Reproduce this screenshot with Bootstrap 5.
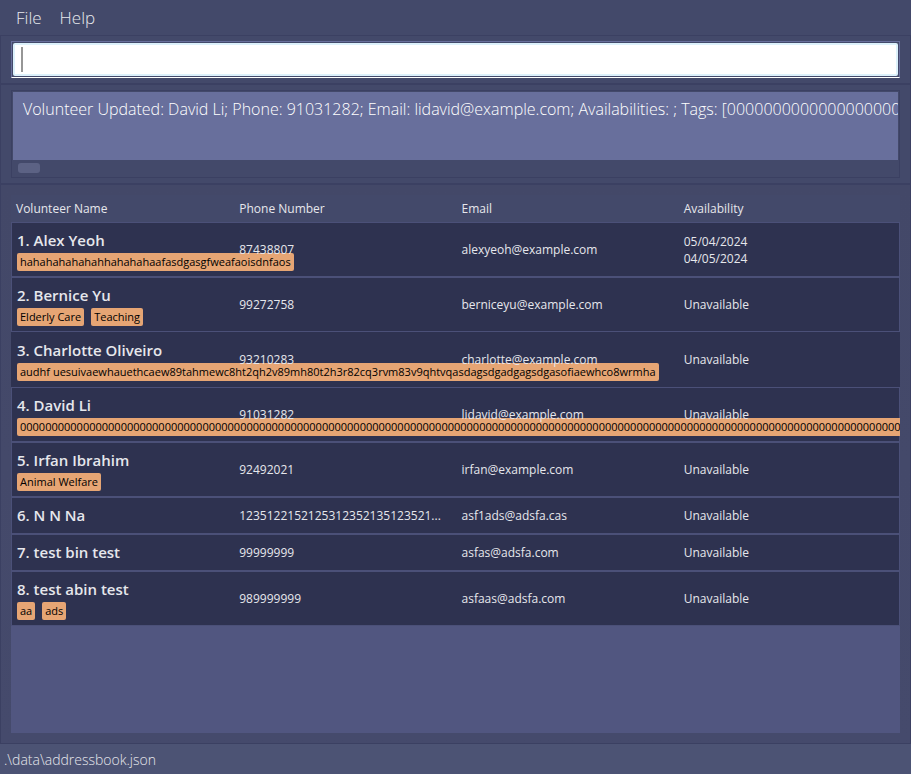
<!DOCTYPE html>
<html lang="en">
<head>
<meta charset="utf-8">
<meta name="viewport" content="width=device-width, initial-scale=1">
<title>Volunteers</title>
<link href="https://cdn.jsdelivr.net/npm/bootstrap@5.3.0/dist/css/bootstrap.min.css" rel="stylesheet">
<style>
  body { font-family: "Open Sans", "Noto Sans", sans-serif; background: #43496a; color: #e6e7ec; }
  .menu-strip { height: 35px; padding: 0 9px; gap: 4px; }
  .menu-item { font-size: 17px; font-weight: 300; line-height: 24px; color: #e8e9ee; padding: 0 7px; border: 0; background: none; }
  .pane { border: 1px solid #3b4062; padding: 5px 10px; }
  .command-frame { border: 1px solid #686f9c; border-bottom-color: #fff; padding: 1px; }
  .command-box { display: block; width: 100%; height: 33px; border: 2px solid #dcf1fb; border-radius: 2px; outline: 0; padding: 0 8px; font-size: 17px; caret-color: transparent;
    background: linear-gradient(#969696, #969696) no-repeat 6px 2px / 2px 25px #fff; }
  .result-frame { border: 1px solid #3b4062; padding: 1px; }
  .result-text { display: block; width: 100%; height: 68px; border: 0; border-radius: 0; outline: 0; resize: none; overflow: hidden; white-space: pre; background: #686f9c; color: #fff; font-size: 16px; font-weight: 300; line-height: 24px; padding: 5px 10px; }
  .scroll-track { height: 16px; padding: 3px 5px; }
  .scroll-thumb { width: 22px; height: 10px; border-radius: 3px; background: #5c6284; }
  .list-pane { padding: 10px; background: linear-gradient(#434868, #454a6c); }
  .list-frame { background: linear-gradient(#43496a 27px, #515680 27px); }
  .volunteers { table-layout: fixed; border-collapse: separate; border-spacing: 0; font-size: 12px; line-height: 17px; color: #e6e7ec; }
  .volunteers th { font-weight: 400; padding: 5px 6px; }
  .volunteers th:first-child { padding-left: 5px; }
  .volunteers td { border: 0 solid #4b5078; border-width: 1px 0; background: #2e3250; padding: 0 6px; vertical-align: middle; white-space: nowrap; }
  .volunteers td:first-child { border-left-width: 1px; vertical-align: top; padding: 7px 5px 5px; }
  .volunteers td:last-child { border-right-width: 1px; }
  .volunteers tbody tr { height: 37px; }
  .volunteers .is-picked td { border-color: #2e3250; }
  .person { font-size: 15px; font-weight: 600; line-height: 21px; }
  .tag-line { margin-top: 2px; gap: 7px; }
  .tag-chip { flex: none; height: 18px; padding: 0 3px; border-radius: 2px; background: #e6a574; color: #000; font-size: 11px; line-height: 18px; }
  .status-strip { height: 30px; padding: 1px 4px 0; background: #4c5374; font-size: 14px; font-weight: 300; line-height: 30px; }
</style>
<script src="https://cdn.jsdelivr.net/npm/bootstrap@5.3.0/dist/js/bootstrap.bundle.min.js"></script>
</head>
<body class="d-flex flex-column vh-100 overflow-hidden">
<nav class="menu-strip d-flex align-items-center">
  <button type="button" class="menu-item">File</button>
  <button type="button" class="menu-item">Help</button>
</nav>
<div class="pane">
  <div class="command-frame"><input type="text" class="command-box" aria-label="Command"></div>
</div>
<div class="pane">
  <div class="result-frame">
    <textarea class="result-text" readonly wrap="off" aria-label="Result">Volunteer Updated: David Li; Phone: 91031282; Email: lidavid@example.com; Availabilities: ; Tags: [0000000000000000000000000000000000000000]</textarea>
    <div class="scroll-track"><div class="scroll-thumb"></div></div>
  </div>
</div>
<main class="pane list-pane flex-grow-1 d-flex flex-column">
  <div class="list-frame flex-grow-1 overflow-hidden">
    <table class="volunteers w-100">
      <thead><tr><th>Volunteer Name</th><th>Phone Number</th><th>Email</th><th>Availability</th></tr></thead>
      <tbody>
        <tr><td><div class="person">1. Alex Yeoh</div><div class="tag-line d-flex"><span class="tag-chip">hahahahahahahhahahahaafasdgasgfweafaoisdnfaos</span></div></td><td>87438807</td><td>alexyeoh@example.com</td><td>05/04/2024<br>04/05/2024</td></tr>
        <tr><td><div class="person">2. Bernice Yu</div><div class="tag-line d-flex"><span class="tag-chip">Elderly Care</span><span class="tag-chip">Teaching</span></div></td><td>99272758</td><td>berniceyu@example.com</td><td>Unavailable</td></tr>
        <tr class="is-picked"><td><div class="person">3. Charlotte Oliveiro</div><div class="tag-line d-flex"><span class="tag-chip">audhf uesuivaewhauethcaew89tahmewc8ht2qh2v89mh80t2h3r82cq3rvm83v9qhtvqasdagsdgadgagsdgasofiaewhco8wrmha</span></div></td><td>93210283</td><td>charlotte@example.com</td><td>Unavailable</td></tr>
        <tr><td><div class="person">4. David Li</div><div class="tag-line d-flex"><span class="tag-chip">0000000000000000000000000000000000000000000000000000000000000000000000000000000000000000000000000000000000000000000000000000000000000000000000000000000000000000</span></div></td><td>91031282</td><td>lidavid@example.com</td><td>Unavailable</td></tr>
        <tr><td><div class="person">5. Irfan Ibrahim</div><div class="tag-line d-flex"><span class="tag-chip">Animal Welfare</span></div></td><td>92492021</td><td>irfan@example.com</td><td>Unavailable</td></tr>
        <tr><td><div class="person">6. N N Na</div></td><td>1235122152125312352135123521...</td><td>asf1ads@adsfa.cas</td><td>Unavailable</td></tr>
        <tr><td><div class="person">7. test bin test</div></td><td>99999999</td><td>asfas@adsfa.com</td><td>Unavailable</td></tr>
        <tr><td><div class="person">8. test abin test</div><div class="tag-line d-flex"><span class="tag-chip">aa</span><span class="tag-chip">ads</span></div></td><td>989999999</td><td>asfaas@adsfa.com</td><td>Unavailable</td></tr>
      </tbody>
    </table>
  </div>
</main>
<footer class="status-strip">.\data\addressbook.json</footer>
</body>
</html>
